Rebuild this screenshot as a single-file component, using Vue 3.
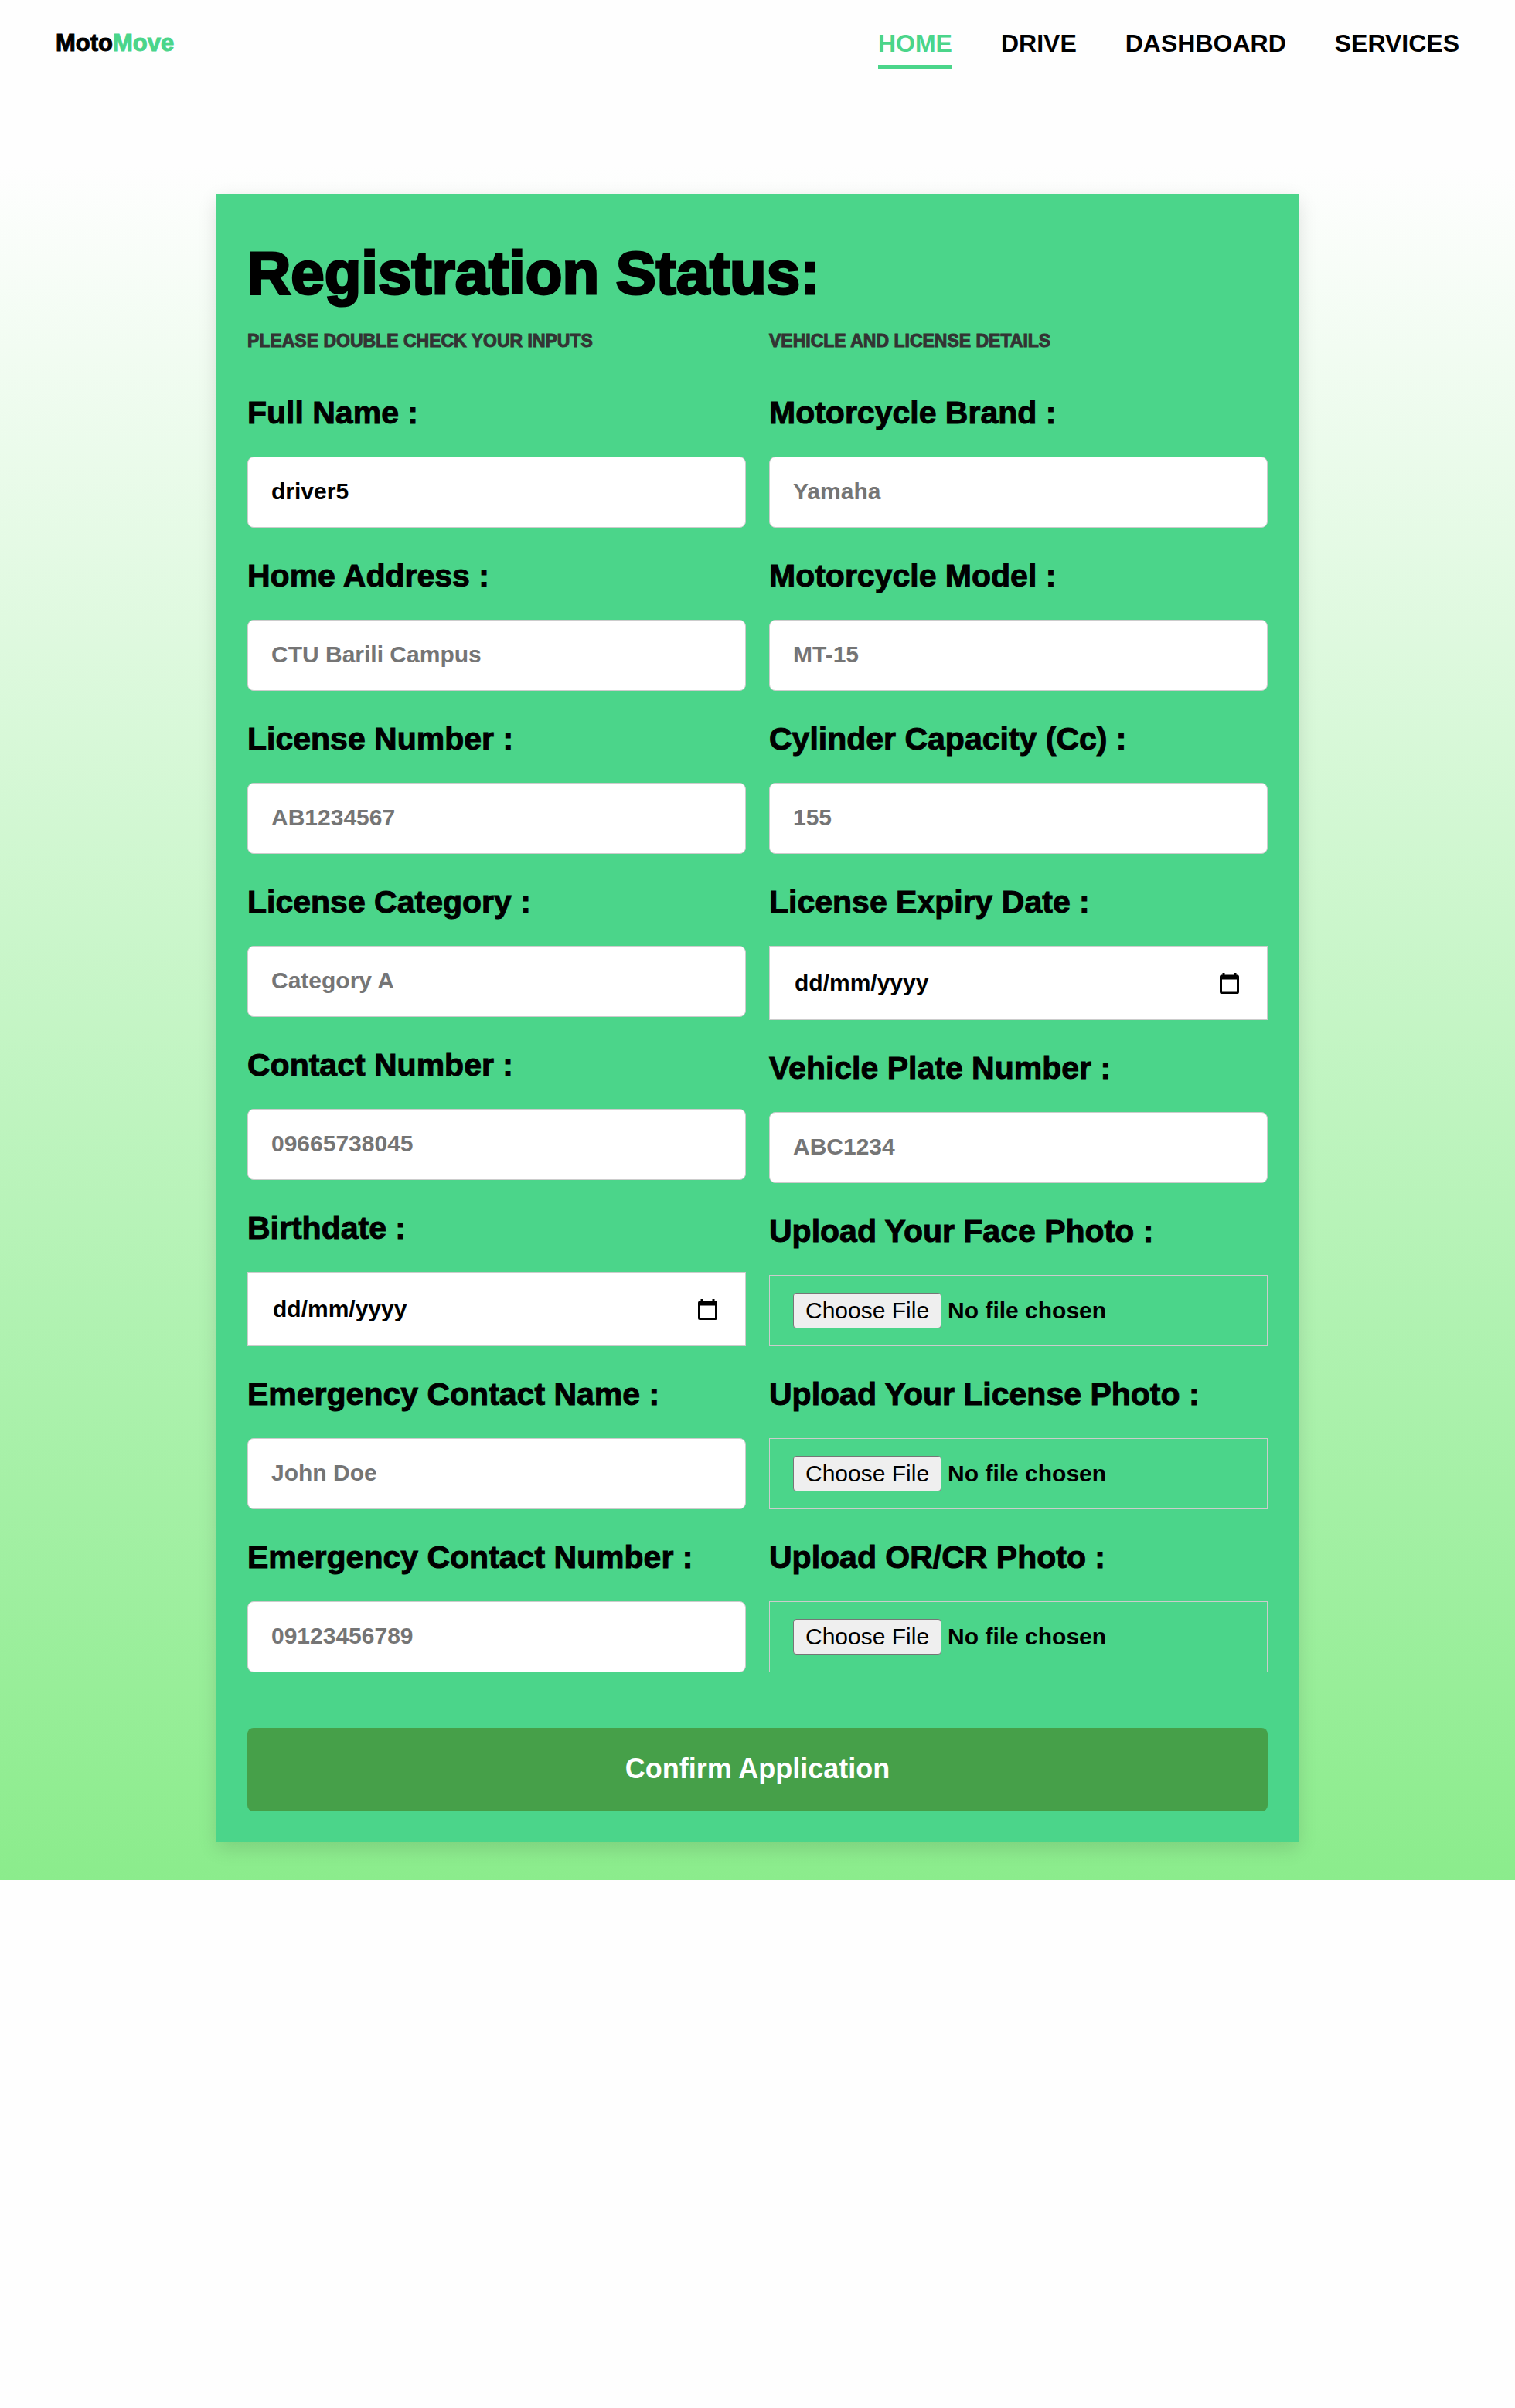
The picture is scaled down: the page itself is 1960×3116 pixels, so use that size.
<script setup>
const nav = [
  { label: 'HOME', active: true },
  { label: 'DRIVE' },
  { label: 'DASHBOARD' },
  { label: 'SERVICES' },
]

const columns = [
  {
    title: 'PLEASE DOUBLE CHECK YOUR INPUTS',
    fields: [
      { id: 'full-name', label: 'Full Name :', type: 'text', value: 'driver5' },
      { id: 'home-address', label: 'Home Address :', type: 'text', placeholder: 'CTU Barili Campus' },
      { id: 'license-number', label: 'License Number :', type: 'text', placeholder: 'AB1234567' },
      { id: 'license-category', label: 'License Category :', type: 'text', placeholder: 'Category A' },
      { id: 'contact-number', label: 'Contact Number :', type: 'text', placeholder: '09665738045' },
      { id: 'birthdate', label: 'Birthdate :', type: 'date' },
      { id: 'emergency-name', label: 'Emergency Contact Name :', type: 'text', placeholder: 'John Doe' },
      { id: 'emergency-number', label: 'Emergency Contact Number :', type: 'text', placeholder: '09123456789' },
    ],
  },
  {
    title: 'VEHICLE AND LICENSE DETAILS',
    fields: [
      { id: 'brand', label: 'Motorcycle Brand :', type: 'text', placeholder: 'Yamaha' },
      { id: 'model', label: 'Motorcycle Model :', type: 'text', placeholder: 'MT-15' },
      { id: 'capacity', label: 'Cylinder Capacity (Cc) :', type: 'text', placeholder: '155' },
      { id: 'expiry', label: 'License Expiry Date :', type: 'date' },
      { id: 'plate', label: 'Vehicle Plate Number :', type: 'text', placeholder: 'ABC1234' },
      { id: 'face-photo', label: 'Upload Your Face Photo :', type: 'file' },
      { id: 'license-photo', label: 'Upload Your License Photo :', type: 'file' },
      { id: 'orcr-photo', label: 'Upload OR/CR Photo :', type: 'file' },
    ],
  },
]
</script>

<template>
  <div class="page">
    <header class="topbar">
      <a class="logo" href="#">Moto<span class="logo-accent">Move</span></a>
      <nav class="nav">
        <a v-for="item in nav" :key="item.label" href="#" class="nav-link" :class="{ active: item.active }">{{ item.label }}</a>
      </nav>
    </header>
    <main class="main">
      <form class="card" @submit.prevent>
        <h1 class="title">Registration Status:</h1>
        <div class="columns">
          <section v-for="column in columns" :key="column.title" class="column">
            <h2 class="subtitle">{{ column.title }}</h2>
            <div v-for="field in column.fields" :key="field.id" class="field">
              <label class="label" :for="field.id">{{ field.label }}</label>
              <div v-if="field.type === 'date'" class="date">
                <input :id="field.id" class="date-input" type="text" value="dd/mm/yyyy" />
                <svg class="calendar" viewBox="0 0 50 54" aria-hidden="true">
                  <path fill-rule="evenodd" d="M7 0h6v5h24V0h6v5h2a5 5 0 0 1 5 5v39a5 5 0 0 1-5 5H5a5 5 0 0 1-5-5V10a5 5 0 0 1 5-5h2zM6 17v32h38V17z" />
                </svg>
              </div>
              <input v-else-if="field.type === 'file'" :id="field.id" class="file" type="file" />
              <input v-else :id="field.id" class="text" type="text" :value="field.value" :placeholder="field.placeholder" />
            </div>
          </section>
        </div>
        <button class="submit" type="submit">Confirm Application</button>
      </form>
    </main>
  </div>
</template>

<style>
body {
  margin: 0;
  background: #fefefe;
}
</style>

<style scoped>
.page,
.page * {
  box-sizing: border-box;
}

.page {
  font-family: "Liberation Sans", Arial, sans-serif;
  font-weight: 700;
  color: #000;
}

.topbar {
  display: flex;
  align-items: flex-start;
  justify-content: space-between;
  height: 112px;
  padding: 36px 72px 0;
}

.logo {
  color: #000;
  font-size: 31px;
  line-height: 40px;
  text-decoration: none;
  -webkit-text-stroke: 1px currentColor;
}

.logo-accent {
  color: #4bd58a;
}

.nav {
  display: flex;
  gap: 63px;
}

.nav-link {
  padding-bottom: 8px;
  color: #000;
  font-size: 32px;
  line-height: 40px;
  text-decoration: none;
}

.nav-link.active {
  border-bottom: 5px solid #4bd58a;
  color: #4bd58a;
}

.main {
  padding: 139px 40px 49px;
  background: linear-gradient(#fefefe 104px, #8bec8c);
}

.card {
  width: 100%;
  max-width: 1400px;
  margin: 0 auto;
  padding: 50px 40px 40px;
  background: #4bd58a;
  box-shadow: 0 8px 24px rgba(0, 0, 0, 0.12);
}

.title {
  margin: 0 0 20px;
  font-size: 78px;
  line-height: 104px;
  -webkit-text-stroke: 3px currentColor;
}

.columns {
  display: flex;
  gap: 30px;
}

.column {
  flex: 1;
  min-width: 0;
}

.subtitle {
  margin: 0 0 53px;
  color: #333;
  font-size: 23px;
  line-height: 32px;
  -webkit-text-stroke: 1px currentColor;
}

.field {
  margin-bottom: 38px;
}

.label {
  display: block;
  margin-bottom: 33px;
  font-size: 41px;
  line-height: 48px;
  -webkit-text-stroke: 1px currentColor;
}

.text,
.file,
.date {
  display: block;
  width: 100%;
  height: 92px;
  padding: 0 30px;
  border: 1px solid #ccc;
  color: #000;
  font: 700 30px "Liberation Sans", Arial, sans-serif;
}

.text {
  padding-bottom: 2px;
  border-radius: 8px;
  background: #fff;
}

.text::placeholder {
  color: #757575;
}

.date {
  display: flex;
  align-items: center;
  height: 96px;
  background: #fff;
}

.date-input {
  flex: 1;
  min-width: 0;
  padding: 0 2px;
  border: 0;
  background: none;
  color: #000;
  font: inherit;
}

.calendar {
  width: 25px;
  height: 27px;
  margin-right: 6px;
}

.file {
  padding: 22px 30px;
}

.file::file-selector-button {
  height: 46px;
  margin: 0 8px 0 0;
  padding: 0 15px;
  border: 1px solid #767676;
  border-radius: 4px;
  background: #efefef;
  color: #000;
  font: 400 30px "Liberation Sans", Arial, sans-serif;
}

.submit {
  display: block;
  width: 100%;
  height: 108px;
  margin-top: 34px;
  padding: 0 0 2px;
  border: 0;
  border-radius: 8px;
  background: #46a049;
  color: #fff;
  font: 700 36px "Liberation Sans", Arial, sans-serif;
}
</style>
